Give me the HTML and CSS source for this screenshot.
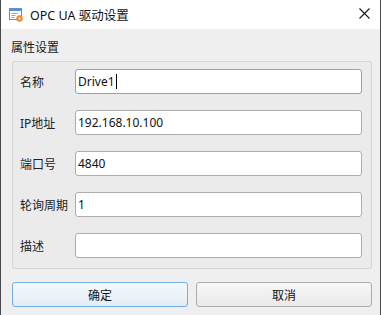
FILE: index.html
```html
<!DOCTYPE html>
<html lang="zh-CN">
<head>
<meta charset="utf-8">
<title>OPC UA 驱动设置</title>
<link rel="stylesheet" href="styles.css">
</head>
<body>
<div class="window">
  <div class="titlebar">
    <svg class="app-icon" width="14" height="14" viewBox="0 0 14 14">
      <rect x="0.5" y="0.5" width="12" height="11" fill="#ffffff" stroke="#5b8fd0"/>
      <rect x="0.5" y="0.5" width="12" height="2.5" fill="#5b8fd0"/>
      <rect x="2.5" y="5" width="6" height="1" fill="#7fa6d8"/>
      <rect x="2.5" y="7" width="4" height="1" fill="#7fa6d8"/>
      <rect x="2.5" y="9" width="3" height="1" fill="#7fa6d8"/>
      <circle cx="10.5" cy="10.5" r="3.2" fill="#f08a24"/>
      <circle cx="10.5" cy="10.5" r="1.2" fill="#ffd9a8"/>
    </svg>
    <span class="title">OPC UA 驱动设置</span>
    <svg class="close" width="11" height="11" viewBox="0 0 11 11">
      <path d="M0.5 0.5 L10.5 10.5 M10.5 0.5 L0.5 10.5" stroke="#1a1a1a" stroke-width="1.1" fill="none"/>
    </svg>
  </div>
  <div class="content">
    <div class="group-title">属性设置</div>
    <div class="group">
      <div class="row">
        <span class="label">名称</span>
        <div class="field focused">Drive1<span class="caret"></span></div>
      </div>
      <div class="row">
        <span class="label">IP地址</span>
        <div class="field">192.168.10.100</div>
      </div>
      <div class="row">
        <span class="label">端口号</span>
        <div class="field">4840</div>
      </div>
      <div class="row">
        <span class="label">轮询周期</span>
        <div class="field">1</div>
      </div>
      <div class="row">
        <span class="label">描述</span>
        <div class="field"></div>
      </div>
    </div>
    <div class="buttons">
      <button class="btn primary">确定</button>
      <button class="btn">取消</button>
    </div>
  </div>
</div>
</body>
</html>
```
FILE: styles.css
```css
html, body {
  margin: 0;
  padding: 0;
  background: #f0f0f0;
}
body {
  width: 381px;
  height: 315px;
  overflow: hidden;
  font-family: "Noto Sans", "Noto Sans CJK SC", sans-serif;
  font-size: 12px;
  color: #1a1a1a;
}
.window {
  box-sizing: border-box;
  width: 381px;
  height: 315px;
  border-left: 1px solid #4a4a4a;
  border-right: 1px solid #4a4a4a;
  background: #efefef;
  display: flex;
  flex-direction: column;
}
.titlebar {
  height: 29px;
  background: #ffffff;
  display: flex;
  align-items: center;
  padding-left: 8px;
}
.app-icon {
  margin-top: 1px;
}
.title {
  margin-left: 7px;
  font-size: 12.5px;
  color: #111;
  flex: 1;
}
.close {
  margin-right: 10px;
  margin-top: -2px;
}
.content {
  display: flex;
  flex-direction: column;
}
.group-title {
  margin: 10px 0 0 10px;
  height: 16px;
  line-height: 16px;
  font-family: "Noto Sans CJK SC", sans-serif;
}
.group {
  margin: 6px 0 0 11px;
  width: 360px;
  box-sizing: border-box;
  height: 208px;
  border: 1px solid #d6d6d6;
  border-radius: 2px;
  background: #ebebeb;
  padding: 7px 9px 9px 7px;
  display: flex;
  flex-direction: column;
  gap: 16px;
}
.row {
  display: flex;
  align-items: center;
  height: 25px;
}
.label {
  width: 55px;
  font-family: "Noto Sans", "Noto Sans CJK SC", sans-serif;
  color: #222;
}
.field {
  flex: 1;
  box-sizing: border-box;
  height: 25px;
  border: 1px solid #adadad;
  border-radius: 3px;
  background: #ffffff;
  padding-left: 2px;
  line-height: 23px;
  font-size: 12px;
  color: #111;
  display: flex;
  align-items: center;
}
.field.focused {
  border-color: #6aaee6;
}
.caret {
  display: inline-block;
  width: 1px;
  height: 15px;
  background: #000;
  margin-left: 1px;
}
.buttons {
  display: flex;
  gap: 8px;
  margin: 13px 0 0 11px;
}
.btn {
  width: 176px;
  height: 25px;
  box-sizing: border-box;
  border: 1px solid #adadad;
  border-radius: 3px;
  background: linear-gradient(#f7f7f7, #e9e9e9);
  font-family: "Noto Sans CJK SC", sans-serif;
  font-size: 12px;
  color: #111;
  padding: 0;
}
.btn.primary {
  border-color: #72aee0;
  background: linear-gradient(#f5f9fd, #e4ecf4);
}
```
